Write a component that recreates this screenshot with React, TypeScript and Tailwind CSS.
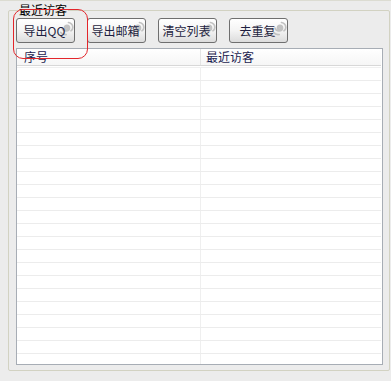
import React from 'react';

const buttons = ['导出QQ', '导出邮箱', '清空列表', '去重复'];

function Swirl() {
  return (
    <svg
      width="16"
      height="16"
      viewBox="0 0 16 16"
      className="absolute right-0 top-[1px]"
      fill="none"
      stroke="#c2c2c2"
      strokeWidth="1.7"
      strokeLinecap="round"
    >
      <path d="M8 8 C8 6.5 10 6.5 10 8 C10 10 6.5 10 6.5 7.5 C6.5 4.5 11.5 4.5 11.5 8 C11.5 11.5 5 12 4 8" />
      <path d="M10.5 2.5 C13 3 14.8 5 14.8 7.5 C14.8 9 14 10.2 13 10.8" />
      <path d="M2.8 12.5 C4 14.2 6 14.8 8.2 14.5" />
    </svg>
  );
}

export default function App() {
  const rows = Array.from({ length: 24 });
  return (
    <div
      className="relative w-[391px] h-[381px] bg-[#ececec] border-t border-[#dcdcd2] pl-[8px] pt-[9px] overflow-hidden"
      style={{ fontFamily: '"Noto Sans CJK SC", "Noto Sans", sans-serif' }}
    >
      {/* Group box */}
      <div className="relative w-[382px] h-[361px] border border-[#d2d2c2] rounded-[2px] pl-[7px] pt-[7px]">
        <span className="absolute left-[9px] top-[-9px] bg-[#ececec] px-px text-[12px] leading-[15px] text-black">
          最近访客
        </span>

        {/* Toolbar */}
        <div className="flex gap-[12px]">
          {buttons.map((b) => (
            <button
              key={b}
              className="relative w-[59px] h-[25px] pr-[2px] rounded-[3px] border border-[#6f6f6f] bg-gradient-to-b from-white via-[#f4f4f4] to-[#dcdcdc] text-[12px] leading-[23px] text-[#1e1e40]"
            >
              <Swirl />
              <span className="relative">{b}</span>
            </button>
          ))}
        </div>

        {/* List */}
        <div className="mt-[5px] w-[367px] h-[317px] border border-[#a7adb5] bg-white overflow-hidden">
          <div className="flex h-[17px] mr-px border-b border-[#d8d8d8] bg-gradient-to-b from-white to-[#f6f6f6] text-[12px] leading-[16px] text-[#1c1c50]">
            <div className="w-[184px] pl-[7px] border-r border-[#e4e4e4]">序号</div>
            <div className="flex-1 pl-[5px]">最近访客</div>
          </div>
          <div className="h-[2px] mr-px border-b border-[#f0f0f0]" />
          {rows.map((_, i) => (
            <div key={i} className="flex h-[13px] mr-px border-b border-[#ececec]">
              <div className="w-[184px] border-r border-[#efefef]" />
              <div className="flex-1" />
            </div>
          ))}
        </div>
      </div>

      {/* Highlight annotation */}
      <div className="absolute left-[13px] top-[8px] w-[75px] h-[50px] rounded-[10px] border border-[#e3262b]" />
    </div>
  );
}
